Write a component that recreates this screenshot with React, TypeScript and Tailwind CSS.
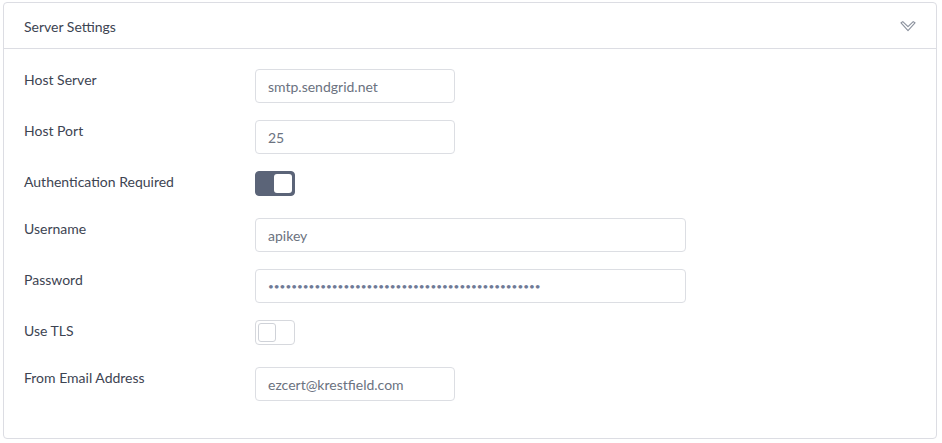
import { useState } from "react";

function Toggle({ on, onChange }: { on: boolean; onChange: () => void }) {
    return (
        <button
            onClick={onChange}
            className={`w-[40px] h-[25px] rounded-[4px] border p-[2px] flex ${on ? 'bg-[#5b6478] border-[#5b6478] justify-end' : 'bg-white border-[#d6d8dd] justify-start'}`}
        >
            <span className={`block w-[18px] h-full rounded-[3px] ${on ? 'bg-white' : 'bg-white border border-[#cfd2d8]'}`} />
        </button>
    );
}

function Field({ label, children, toggle }: { label: string; children: React.ReactNode; toggle?: boolean }) {
    return (
        <div className={`flex mb-[17px] ${toggle ? 'h-[30px]' : ''}`}>
            <label className="w-[231px] shrink-0 pt-px leading-5 text-[14px] text-[#3d4452]">{label}</label>
            <div>{children}</div>
        </div>
    );
}

export default function App() {
    const [ host, setHost ] = useState('smtp.sendgrid.net');
    const [ port, setPort ] = useState('25');
    const [ auth, setAuth ] = useState(true);
    const [ user, setUser ] = useState('apikey');
    const [ pass, setPass ] = useState('SG.xxxxxxxxxxxxxxxxxxxxxxxxxxxxxxxxxxxxxxxxxxxxxxxxxxxx'.slice(0, 47));
    const [ tls, setTls ] = useState(false);
    const [ from, setFrom ] = useState('ezcert@krestfield.com');

    const inputCls = "h-[34px] px-3 border border-[#dcdee3] rounded-[4px] text-[14px] text-[#6b7280] focus:outline-none";

    return (
        <div className="bg-white min-h-[443px] pt-[2px] pl-[3px] pr-[5px] pb-[4px]" style={{ fontFamily: 'Lato, "Open Sans", sans-serif' }}>
            <div className="border border-[#dcdde3] rounded-[4px] bg-white">
                <header className="h-[46px] flex items-center justify-between pl-5 pr-5 border-b border-[#dcdde3]">
                    <span className="text-[14px] text-[#3d4452] pt-[2px]">Server Settings</span>
                    <svg width="16" height="11" viewBox="0 0 16 11" className="mt-[2px]">
                        <path d="M1 1.8 L2.8 0.6 L8 5.6 L13.2 0.6 L15 1.8 L8 9.6 Z" fill="none" stroke="#8c929e" strokeWidth="1.1" strokeLinejoin="round" />
                    </svg>
                </header>
                <section className="pt-5 px-5 pb-[20px]">
                    <Field label="Host Server">
                        <input className={`${inputCls} w-[200px]`} value={host} onChange={(e) => setHost(e.target.value)} />
                    </Field>
                    <Field label="Host Port">
                        <input className={`${inputCls} w-[200px]`} value={port} onChange={(e) => setPort(e.target.value)} />
                    </Field>
                    <Field label="Authentication Required" toggle>
                        <Toggle on={auth} onChange={() => setAuth(!auth)} />
                    </Field>
                    <Field label="Username">
                        <input className={`${inputCls} w-[431px]`} value={user} onChange={(e) => setUser(e.target.value)} />
                    </Field>
                    <Field label="Password">
                        <input type="password" className={`${inputCls} w-[431px] !text-[10px] text-[#6f7a96]`} value={pass} onChange={(e) => setPass(e.target.value)} />
                    </Field>
                    <Field label="Use TLS" toggle>
                        <Toggle on={tls} onChange={() => setTls(!tls)} />
                    </Field>
                    <Field label="From Email Address">
                        <input className={`${inputCls} w-[200px]`} value={from} onChange={(e) => setFrom(e.target.value)} />
                    </Field>
                </section>
            </div>
        </div>
    );
}
